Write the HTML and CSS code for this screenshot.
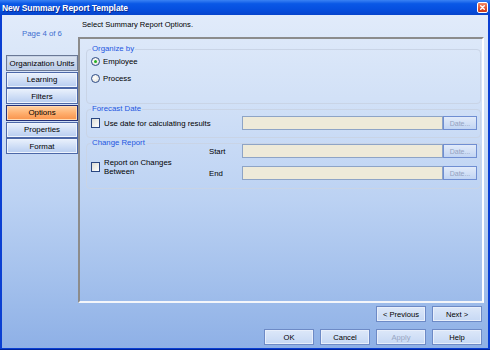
FILE: index.html
```html
<!DOCTYPE html>
<html lang="en">
<head>
    <meta charset="UTF-8">
    <title>New Summary Report Template</title>
    <link rel="stylesheet" href="styles.css">
</head>
<body>
    <div class="window">
        <div class="titlebar">
            <span class="title">New Summary Report Template</span>
            <span class="close">
                <svg width="10" height="10" viewBox="0 0 10 10">
                    <path d="M3 3 L7 7 M7 3 L3 7" stroke="#fff" stroke-width="1.6" stroke-linecap="round"/>
                </svg>
            </span>
        </div>

        <div class="client">
            <aside class="sidebar">
                <div class="page-count">Page 4 of 6</div>
                <nav class="steps">
                    <button class="step step-focus">Organization Units</button>
                    <button class="step">Learning</button>
                    <button class="step">Filters</button>
                    <button class="step step-active">Options</button>
                    <button class="step">Properties</button>
                    <button class="step">Format</button>
                </nav>
            </aside>

            <main class="content">
                <div class="intro">Select Summary Report Options.</div>

                <div class="panel">
                    <fieldset class="group group-organize">
                        <legend>Organize by</legend>
                        <label class="option-row"><span class="radio radio-checked"></span>Employee</label>
                        <label class="option-row"><span class="radio"></span>Process</label>
                    </fieldset>

                    <fieldset class="group group-forecast">
                        <legend>Forecast Date</legend>
                        <div class="date-grid">
                            <label class="check-label"><span class="checkbox"></span>Use date for calculating results</label>
                            <div class="date-input"></div>
                            <button class="date-btn" disabled>Date...</button>
                        </div>
                    </fieldset>

                    <fieldset class="group group-change">
                        <legend>Change Report</legend>
                        <div class="date-grid change-grid">
                            <label class="check-label check-span"><span class="checkbox"></span><span>Report on Changes<br>Between</span></label>
                            <span class="field-label">Start</span>
                            <div class="date-input"></div>
                            <button class="date-btn" disabled>Date...</button>
                            <span class="field-label">End</span>
                            <div class="date-input"></div>
                            <button class="date-btn" disabled>Date...</button>
                        </div>
                    </fieldset>
                </div>

                <div class="button-row wizard-nav">
                    <button class="dlg-btn">&lt; Previous</button>
                    <button class="dlg-btn">Next &gt;</button>
                </div>

                <div class="button-row dialog-buttons">
                    <button class="dlg-btn">OK</button>
                    <button class="dlg-btn">Cancel</button>
                    <button class="dlg-btn" disabled>Apply</button>
                    <button class="dlg-btn">Help</button>
                </div>
            </main>
        </div>
    </div>
</body>
</html>
```

FILE: styles.css
```css
* {
    box-sizing: border-box;
    font-family: "Liberation Sans", Arial, sans-serif;
}

body {
    margin: 0;
    padding: 0;
    background-color: #fff;
}

.window {
    width: 490px;
    height: 350px;
    display: flex;
    flex-direction: column;
    background-color: #0a3fd2;
    border-bottom: 1px solid #00249c;
}

.titlebar {
    height: 15px;
    display: flex;
    align-items: center;
    justify-content: space-between;
    padding: 0 2px 0 2px;
    background: linear-gradient(#3a82f4, #0a58e6 25%, #0650e0 60%, #0644cc);
}

.title {
    color: #fff;
    font-weight: bold;
    font-size: 8.5px;
    letter-spacing: -0.05px;
    text-shadow: 1px 1px 0 #0a2a90;
}

.close {
    width: 11px;
    height: 11px;
    display: flex;
    border: 1px solid #fff;
    border-radius: 2px;
    background: linear-gradient(#f08a6a, #e0502c 60%, #c83c1c);
    align-items: center;
    justify-content: center;
}

.close svg {
    width: 9px;
    height: 9px;
}

.client {
    flex: 1;
    margin: 0 2px 1px 2px;
    display: grid;
    grid-template-columns: 76px 1fr;
    background: linear-gradient(#e1ebfa 0%, #d2e1f7 25%, #bcd2f3 55%, #a3c0ec 80%, #8eb0e6 100%);
}

.sidebar {
    display: flex;
    flex-direction: column;
}

.page-count {
    padding: 14px 0 0 4px;
    height: 40px;
    line-height: 10px;
    text-align: center;
    font-size: 7.8px;
    color: #3f6fd0;
}

.steps {
    display: flex;
    flex-direction: column;
    gap: 0.65px;
    margin-left: 4px;
    width: 72px;
}

.step {
    height: 16px;
    padding: 0;
    font-size: 7.9px;
    color: #000;
    border: 1px solid #4c68a8;
    box-shadow: inset 0 0 0 1px #eef4fd;
    background: linear-gradient(#eaf1fc, #d3e1f7 45%, #b7cdf0);
}

.step-focus {
    border-color: #6a7896;
    box-shadow: inset 0 0 0 1px #c7d3e6;
    background: linear-gradient(#dfe6f2, #cbd8ec 50%, #b6c9e8);
}

.step-active {
    border-color: #23307a;
    box-shadow: inset 0 0 0 1px #ffd9b0;
    background: linear-gradient(#ffd3a4, #ffb070 50%, #f8924a);
}

.content {
    display: flex;
    flex-direction: column;
}

.intro {
    height: 22px;
    padding: 5px 0 0 4px;
    line-height: 10px;
    font-size: 7.6px;
    color: #000;
}

.panel {
    height: 266px;
    margin-right: 4px;
    padding: 5px 1px 0 6px;
    border-top: 2px solid #8c8c8c;
    border-left: 2px solid #8c8c8c;
    border-right: 2px solid #fff;
    border-bottom: 2px solid #f4f6fa;
}

.group {
    margin: 0;
    padding: 0 0 0 4px;
    border: 1px solid #c9d4e6;
    border-radius: 4px;
    min-width: 0;
}

.group legend {
    padding: 0 1px;
    line-height: 10px;
    font-size: 7.8px;
    color: #2356e0;
}

.group-organize {
    padding-bottom: 18px;
}

.option-row {
    height: 14px;
    display: flex;
    align-items: center;
    gap: 3px;
    font-size: 7.8px;
    color: #000;
}

.option-row + .option-row {
    margin-top: 3px;
}

.radio {
    width: 9px;
    height: 9px;
    border-radius: 50%;
    border: 1px solid #2f4c86;
    background: radial-gradient(circle at 40% 40%, #fff, #dcdcd4);
    display: flex;
    align-items: center;
    justify-content: center;
}

.radio-checked::after {
    content: "";
    width: 3px;
    height: 3px;
    border-radius: 50%;
    background-color: #22b022;
}

.group-forecast {
    padding-top: 2px;
    padding-bottom: 7px;
}

.date-grid {
    display: grid;
    grid-template-columns: 151px 201px 34px;
    align-items: center;
}

.check-label {
    display: flex;
    align-items: center;
    gap: 4px;
    font-size: 7.8px;
    line-height: 9px;
    color: #000;
}

.checkbox {
    flex: none;
    width: 9px;
    height: 10px;
    border: 1px solid #2a4680;
    background: linear-gradient(135deg, #dcdcd4, #fff);
}

.date-input {
    height: 14px;
    border: 1px solid #8ea4c6;
    background-color: #eeead9;
}

.date-btn {
    height: 14px;
    padding: 0;
    font-size: 7px;
    color: #94a2bf;
    border: 1px solid #6f8ed2;
    background: linear-gradient(#e2ebfa, #c2d5f3);
}

.group-change {
    padding-bottom: 8px;
}

.change-grid {
    margin-top: -4px;
    grid-template-columns: 118px 33px 201px 34px;
    row-gap: 8px;
}

.check-span {
    grid-row: 1 / 3;
    align-self: center;
    margin-top: 10px;
}

.field-label {
    font-size: 7.8px;
    color: #000;
}

.button-row {
    display: flex;
    justify-content: flex-end;
    gap: 6px;
    padding-right: 6px;
}

.wizard-nav {
    margin-top: 3px;
}

.dialog-buttons {
    margin-top: 7px;
}

.dlg-btn {
    width: 50px;
    height: 16px;
    padding: 0;
    font-size: 7.6px;
    color: #000;
    border: 1px solid #6d8ac6;
    box-shadow: inset 0 0 0 1px #e8effb;
    background: linear-gradient(#dde8f9, #c6d8f4);
}

.dlg-btn:disabled {
    color: #98a6c2;
}
```
